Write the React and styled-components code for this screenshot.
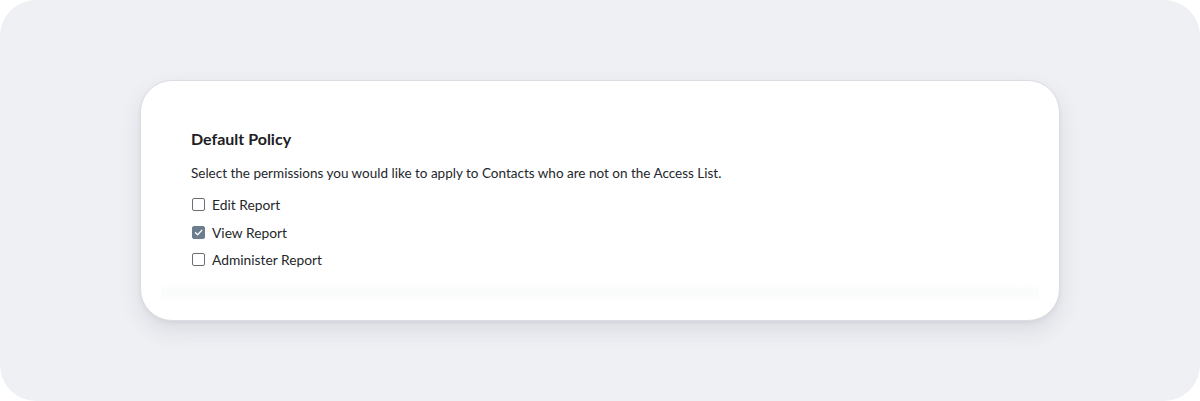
import React, { useState } from "react";
import styled, { createGlobalStyle } from "styled-components";

const Global = createGlobalStyle`
  html, body { margin: 0; padding: 0; background: #ffffff; }
  body { font-family: Lato, "Open Sans", sans-serif; -webkit-font-smoothing: antialiased; }
  * { box-sizing: border-box; }
`;

const Stage = styled.div`
  width: 1200px;
  height: 401px;
  background: #eff0f4;
  border-radius: 36px;
  display: flex;
  align-items: center;
  justify-content: center;
`;

const Card = styled.section`
  position: relative;
  width: 920px;
  height: 241px;
  background: #ffffff;
  border: 1px solid #dcdde2;
  border-radius: 32px;
  box-shadow: 0 10px 22px rgba(40, 48, 70, 0.10), 0 2px 4px rgba(40, 48, 70, 0.06);
  padding: 48px 50px 0 50px;
  overflow: hidden;
  &::after {
    content: "";
    position: absolute;
    left: 20px;
    right: 20px;
    top: 202px;
    height: 20px;
    background: linear-gradient(to bottom, rgba(240, 248, 244, 0), rgba(244, 250, 247, 0.55), rgba(240, 248, 244, 0));
    pointer-events: none;
  }
`;

const Title = styled.h2`
  margin: 0;
  font-size: 16px;
  line-height: 20px;
  font-weight: 700;
  color: #1d2024;
`;

const Description = styled.p`
  margin: 14px 0 0 0;
  font-size: 13.5px;
  line-height: 20px;
  color: #24272b;
`;

const Options = styled.div`
  margin-top: 8px;
  display: flex;
  flex-direction: column;
`;

const Row = styled.label`
  display: flex;
  align-items: center;
  gap: 7px;
  height: 27.5px;
  font-size: 13.8px;
  color: #24272b;
  cursor: pointer;
  user-select: none;
`;

const Box = styled.span`
  width: 13px;
  height: 13px;
  flex: 0 0 13px;
  border-radius: 2px;
  border: 1.5px solid ${(p) => (p.$checked ? "#6c7d8e" : "#6b6f75")};
  background: ${(p) => (p.$checked ? "#6c7d8e" : "#ffffff")};
  display: flex;
  align-items: center;
  justify-content: center;
  margin-left: 1px;
`;

const options = [
  { id: "edit", label: "Edit Report", checked: false },
  { id: "view", label: "View Report", checked: true },
  { id: "admin", label: "Administer Report", checked: false },
];

function Check({ checked, label, onToggle }) {
  return (
    <Row onClick={onToggle}>
      <Box $checked={checked}>
        {checked && (
          <svg width="9" height="9" viewBox="0 0 10 10">
            <path d="M1.6 5.2 L4 7.5 L8.6 2.6" fill="none" stroke="#ffffff" strokeWidth="1.5" strokeLinecap="round" strokeLinejoin="round" />
          </svg>
        )}
      </Box>
      {label}
    </Row>
  );
}

export default function App() {
  const [state, setState] = useState(Object.fromEntries(options.map((o) => [o.id, o.checked])));
  return (
    <>
      <Global />
      <Stage>
        <Card>
          <Title>Default Policy</Title>
          <Description>
            Select the permissions you would like to apply to Contacts who are not on the Access List.
          </Description>
          <Options>
            {options.map((o) => (
              <Check
                key={o.id}
                label={o.label}
                checked={state[o.id]}
                onToggle={() => setState((s) => ({ ...s, [o.id]: !s[o.id] }))}
              />
            ))}
          </Options>
        </Card>
      </Stage>
    </>
  );
}
